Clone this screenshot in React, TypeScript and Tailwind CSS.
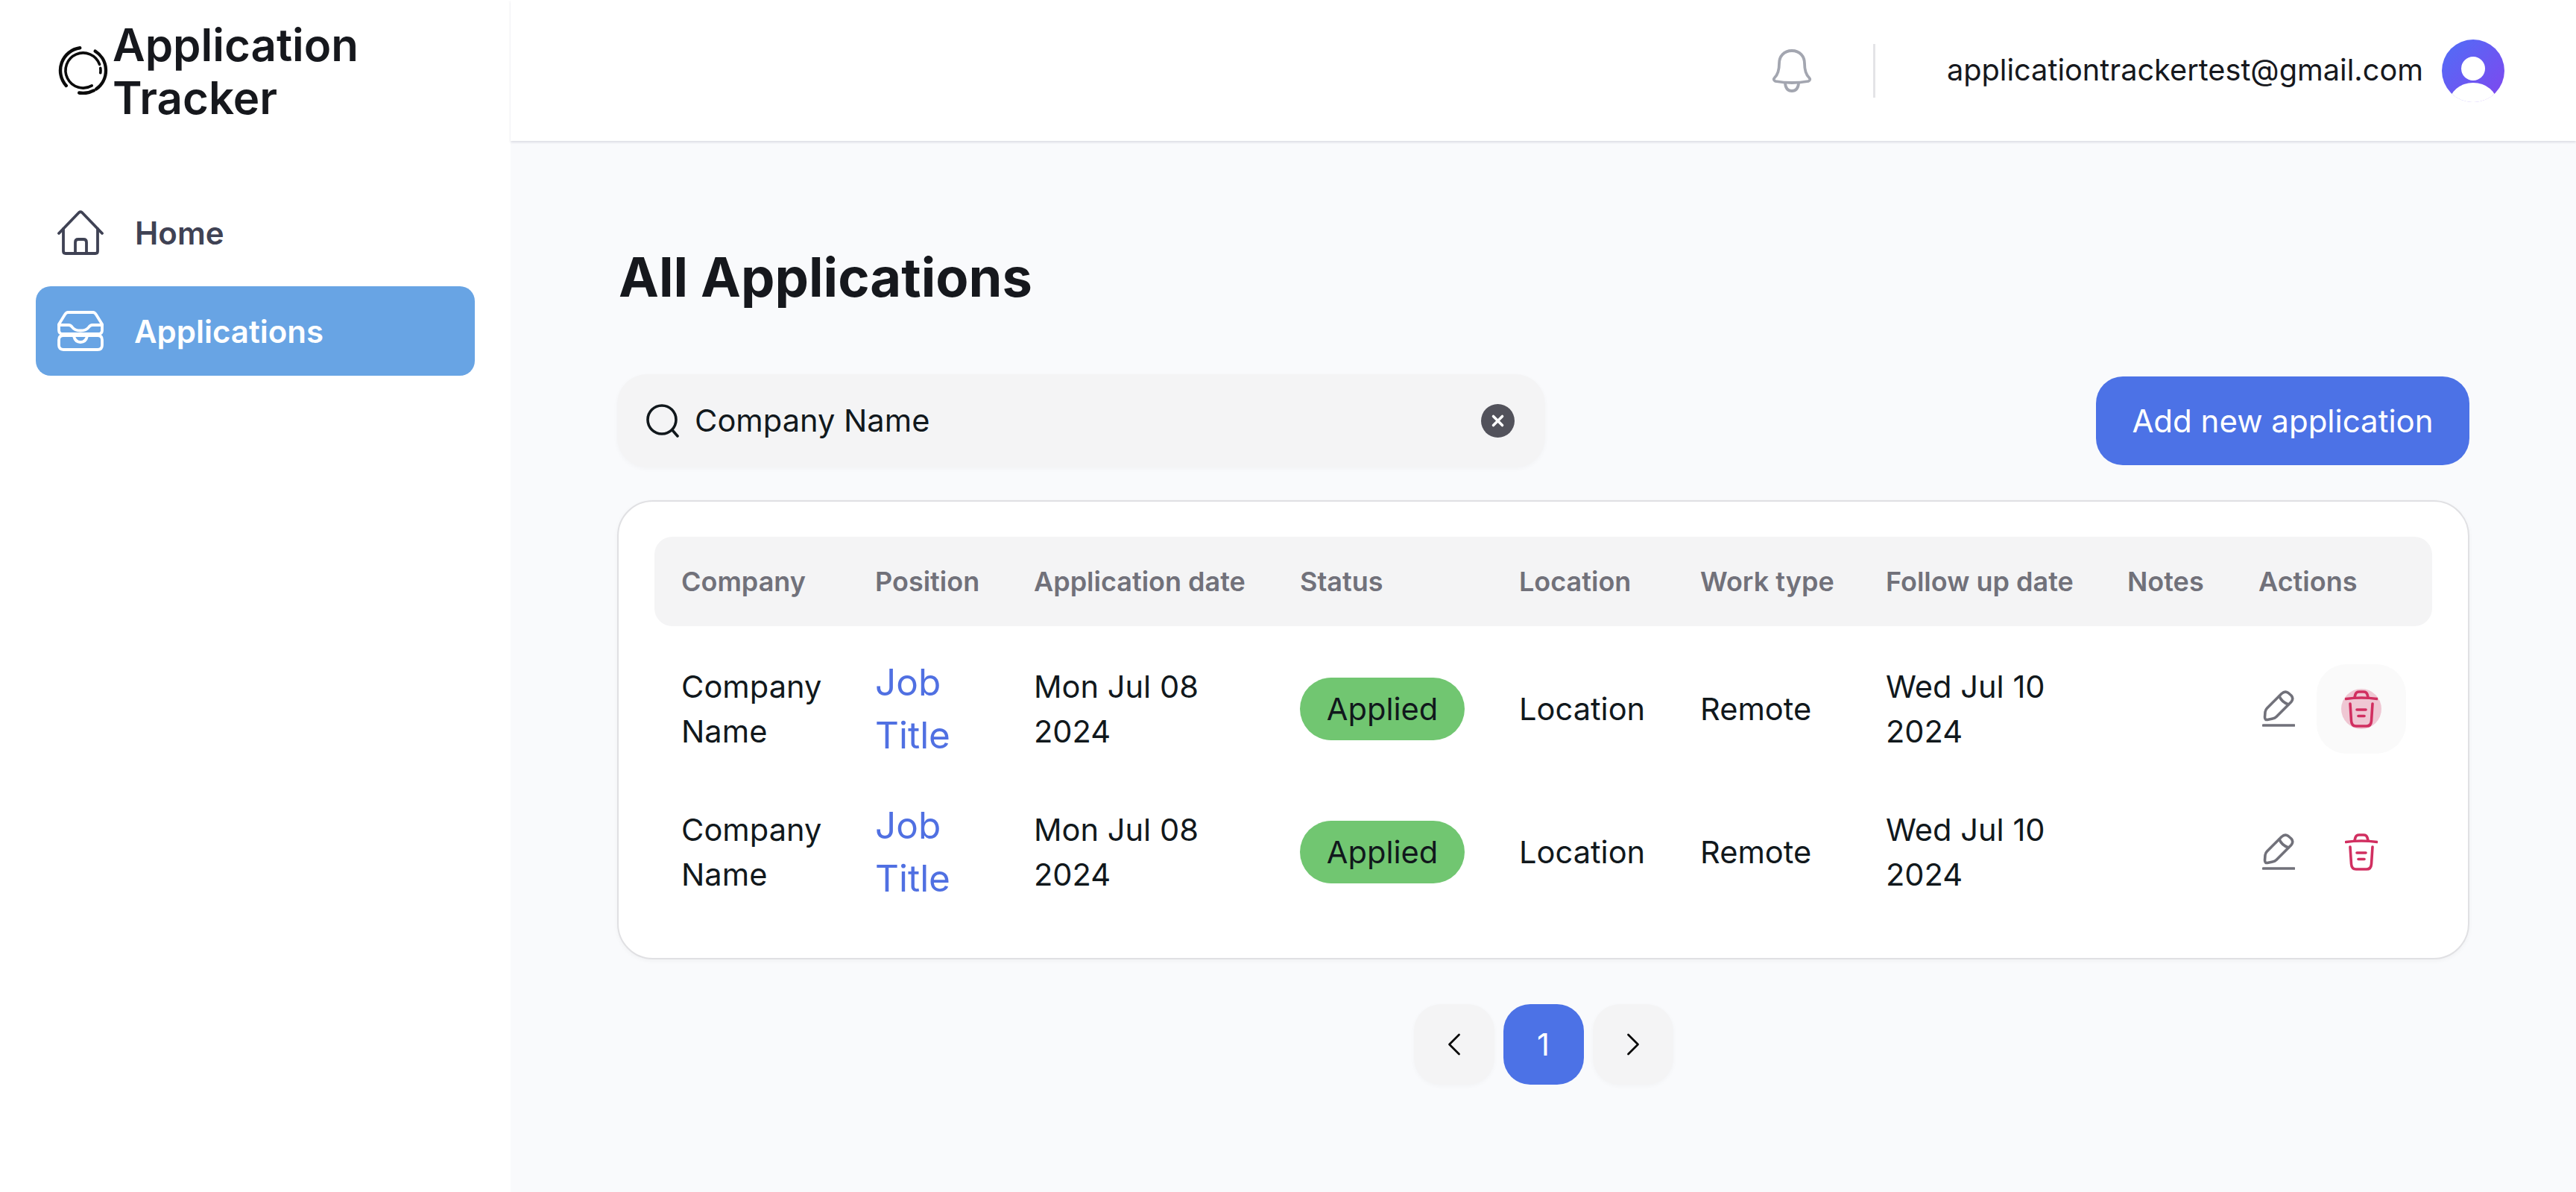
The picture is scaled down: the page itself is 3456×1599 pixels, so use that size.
function arc(cx: number, cy: number, r: number, a0: number, a1: number) {
  const p = (a: number) => {
    const t = (a * Math.PI) / 180;
    return `${(cx + r * Math.cos(t)).toFixed(2)} ${(cy + r * Math.sin(t)).toFixed(2)}`;
  };
  const large = Math.abs(a1 - a0) > 180 ? 1 : 0;
  return `M${p(a0)} A${r} ${r} 0 ${large} 1 ${p(a1)}`;
}

function Logo() {
  return (
    <svg width="67" height="65" viewBox="0 0 67 65" fill="none" stroke="#0b0b0b" strokeLinecap="round" className="shrink-0">
      <g strokeWidth="4.4">
        <path d={arc(33.5, 32.5, 30.5, 138, 262)} />
        <path d={arc(33.5, 32.5, 30.5, 302, 415)} />
        <path d={arc(33.5, 32.5, 30.5, 62, 100)} />
      </g>
      <g strokeWidth="3.6">
        <path d={arc(33.5, 32.5, 23.5, 60, 340)} />
        <path d={arc(33.5, 32.5, 23.5, 352, 368)} />
      </g>
    </svg>
  );
}

function HomeIcon() {
  return (
    <svg width="62" height="60" viewBox="0 0 62 60" fill="none" stroke="#3f4254" strokeWidth="3.8" strokeLinecap="round" strokeLinejoin="round">
      <path d="M2 31 L29 3 Q31 1.5 33 3 L60 31" />
      <path d="M8 25 V55 Q8 58 11 58 H51 Q54 58 54 55 V25" />
      <path d="M24 58 V43 Q24 39 28 39 H35 Q39 39 39 43 V58" />
    </svg>
  );
}

function InboxIcon() {
  return (
    <svg width="62" height="54" viewBox="0 0 62 54" fill="none" stroke="#ffffff" strokeWidth="3.8" strokeLinecap="round" strokeLinejoin="round">
      <path d="M14 2 H48 Q50 2 52 5 L60 18 V26 Q60 31 55 31 H7 Q2 31 2 26 V18 L10 5 Q12 2 14 2 Z" />
      <path d="M2 19 H15 Q18 19 20 22 Q23 26.5 31 26.5 Q39 26.5 42 22 Q44 19 47 19 H60" />
      <path d="M8 33 H54 Q60 33 60 39 V46 Q60 52 54 52 H8 Q2 52 2 46 V39 Q2 33 8 33 Z" />
      <path d="M22 34 Q24 42 31 42 Q38 42 40 34" />
    </svg>
  );
}

function BellIcon() {
  return (
    <svg width="56" height="58" viewBox="0 0 56 58" fill="none" stroke="#a3a6b0" strokeWidth="3.8" strokeLinecap="round" strokeLinejoin="round">
      <path d="M28 2 C17 2 11 10 11 19 C11 27 10 33 5 38 Q2 41 6 43 Q28 47 50 43 Q54 41 51 38 C46 33 45 27 45 19 C45 10 39 2 28 2 Z" />
      <path d="M19 46 Q20 56 28 56 Q36 56 37 46" />
    </svg>
  );
}

function Avatar() {
  return (
    <svg width="84" height="84" viewBox="0 0 84 84">
      <defs>
        <linearGradient id="av" x1="0" y1="0" x2="1" y2="1">
          <stop offset="0" stopColor="#4f6ef7" />
          <stop offset="1" stopColor="#8146ee" />
        </linearGradient>
        <clipPath id="avc">
          <circle cx="42" cy="42" r="42" />
        </clipPath>
      </defs>
      <circle cx="42" cy="42" r="42" fill="url(#av)" />
      <g clipPath="url(#avc)" fill="#fff">
        <circle cx="42" cy="39" r="16" />
        <ellipse cx="42" cy="85" rx="32" ry="27" />
        <rect x="0" y="73" width="84" height="11" />
      </g>
    </svg>
  );
}

function SearchIcon() {
  return (
    <svg width="46" height="46" viewBox="0 0 46 46" fill="none" stroke="#11181c" strokeWidth="3.6" strokeLinecap="round">
      <circle cx="22" cy="22" r="19" />
      <path d="M36 36 L43 44" />
    </svg>
  );
}

function ClearIcon() {
  return (
    <svg width="45" height="45" viewBox="0 0 45 45">
      <circle cx="22.5" cy="22.5" r="22.5" fill="#52525b" />
      <path d="M16.5 16.5 L28.5 28.5 M28.5 16.5 L16.5 28.5" stroke="#fff" strokeWidth="3.6" strokeLinecap="round" />
    </svg>
  );
}

function PencilIcon() {
  return (
    <svg width="44" height="50" viewBox="0 0 44 50" fill="none" stroke="#71717a" strokeWidth="3.6" strokeLinecap="round" strokeLinejoin="round">
      <path d="M26 4.5 Q30.5 0.5 35 3.5 L39 7 Q42.5 11 39 15.5 L19 35.5 Q17 37.5 14 38 L7 39.5 Q3.5 40 3.5 36 L4 29 Q4.5 26 6.5 24 Z" />
      <path d="M23 8 Q26 15.5 35 19" />
      <path d="M1.5 47 H43" />
    </svg>
  );
}

function TrashIcon() {
  return (
    <svg width="44" height="50" viewBox="0 0 44 50" fill="none" stroke="#d12f60" strokeWidth="3.6" strokeLinecap="round" strokeLinejoin="round">
      <path d="M1.5 11.5 Q22 8.5 43 11.5" />
      <path d="M13 9.5 L14 5.5 Q15 2 19 2 H25 Q29 2 30 5.5 L31 9.5" />
      <path d="M7 18 L8.5 41 Q9 48 15 48 H29 Q35 48 35.5 41 L37 18" />
      <path d="M16 26 H28" />
      <path d="M18 34.5 H26" />
    </svg>
  );
}

function Chevron({ right }: { right?: boolean }) {
  return (
    <svg width="18" height="30" viewBox="0 0 18 30" fill="none" stroke="#0b0b0b" strokeWidth="2.8" strokeLinecap="round" strokeLinejoin="round">
      <path d={right ? "M2.5 2 L15.5 15 L2.5 28" : "M15.5 2 L2.5 15 L15.5 28"} />
    </svg>
  );
}

const cols = "grid grid-cols-[260px_213px_357px_294px_243px_249px_324px_176px_270px]";
const headers = ["Company", "Position", "Application date", "Status", "Location", "Work type", "Follow up date", "Notes", "Actions"];

function Row({ active }: { active?: boolean }) {
  return (
    <div className={`${cols} h-[192px] items-center text-[41.6px] leading-[60px] text-[#11181c]`}>
      <div className="pl-9 pr-4">Company Name</div>
      <div className="pl-9 pr-4 text-[49.5px] leading-[71px] text-[#5070e2]">Job Title</div>
      <div className="pl-9 pr-16">Mon Jul 08 2024</div>
      <div className="pl-9">
        <span className="flex h-[84px] w-[221px] items-center justify-center rounded-[42px] bg-[#71c671]">Applied</span>
      </div>
      <div className="pl-9">Location</div>
      <div className="pl-9">Remote</div>
      <div className="pl-9 pr-12">Wed Jul 10 2024</div>
      <div />
      <div className="flex items-center pl-[41px]">
        <PencilIcon />
        <div className={`relative ml-[29px] flex h-[120px] w-[120px] items-center justify-center rounded-[40px] ${active ? "bg-[#fafafa]" : ""}`}>
          {active && <span className="absolute left-[33px] top-[33px] h-[54px] w-[54px] rounded-full bg-[#d12f60]/25" />}
          <span className="relative flex">
            <TrashIcon />
          </span>
        </div>
      </div>
    </div>
  );
}

export default function App() {
  return (
    <div className="flex h-[1599px] w-[3456px] overflow-hidden bg-[#f9fafc] font-['Inter',sans-serif]">
      <aside className="flex h-full w-[685px] shrink-0 flex-col bg-white">
        <div className="flex h-[189px] items-center pl-[78px]">
          <Logo />
          <div className="ml-[6px] mt-[3px] w-[400px] text-[60px] font-semibold leading-[71px] text-[#16181d]">Application Tracker</div>
        </div>
        <nav className="mt-[60px] flex flex-col px-[48px]">
          <div className="flex h-[126px] items-center pl-[29px] text-[42px] font-semibold text-[#3f4254]">
            <HomeIcon />
            <span className="ml-[42px]">Home</span>
          </div>
          <div className="mt-[9px] flex h-[120px] items-center rounded-[20px] bg-[#68a4e4] pl-[29px] text-[42px] font-semibold text-white">
            <InboxIcon />
            <span className="ml-[41px]">Applications</span>
          </div>
        </nav>
      </aside>
      <div className="flex min-w-0 flex-1 flex-col">
        <header className="flex h-[189px] shrink-0 items-center justify-end bg-white pr-[96px] shadow-[0_2px_3px_rgba(20,20,60,0.12)]">
          <BellIcon />
          <div className="ml-[81px] h-[72px] w-[3px] bg-[#e4e4e7]" />
          <span className="ml-[96px] text-[39.7px] text-[#16181d]">applicationtrackertest@gmail.com</span>
          <span className="ml-[25px] flex">
            <Avatar />
          </span>
        </header>
        <main className="flex flex-1 flex-col px-[143px] pt-[139px]">
          <h1 className="ml-[2px] h-[90px] text-[72.2px] font-bold leading-[88px] text-[#16181d]">All Applications</h1>
          <div className="mt-[85px] flex h-[122px] items-center justify-between">
            <div className="flex h-[125px] w-[1245px] items-center rounded-[40px] bg-[#f4f4f5] pl-[38px] pr-[41px] shadow-[0_2px_6px_rgba(0,0,0,0.03)]">
              <SearchIcon />
              <span className="ml-[20px] flex-1 text-[41.6px] text-[#11181c]">Company Name</span>
              <ClearIcon />
            </div>
            <button className="h-[119px] w-[501px] rounded-[36px] bg-[#4c72e6] text-[42px] text-white">Add new application</button>
          </div>
          <section className="mt-[46px] h-[616px] rounded-[48px] border-2 border-[#e0e0e3] bg-white px-[48px] pt-[47px] shadow-[0_2px_6px_rgba(0,0,0,0.04)]">
            <div className={`${cols} h-[120px] items-center rounded-[24px] bg-[#f4f4f5] text-[36px] font-semibold text-[#71717a]`}>
              {headers.map((h) => (
                <div key={h} className="pl-9">
                  {h}
                </div>
              ))}
            </div>
            <div className="mt-[15px]">
              <Row active />
              <Row />
            </div>
          </section>
          <div className="mt-[60px] flex justify-center gap-3">
            <button className="flex h-[108px] w-[108px] items-center justify-center rounded-[36px] bg-[#f4f4f5] shadow-[0_2px_6px_rgba(0,0,0,0.03)]">
              <Chevron />
            </button>
            <button className="flex h-[108px] w-[108px] items-center justify-center rounded-[36px] bg-[#4c72e6] text-[41.6px] text-white">1</button>
            <button className="flex h-[108px] w-[108px] items-center justify-center rounded-[36px] bg-[#f4f4f5] shadow-[0_2px_6px_rgba(0,0,0,0.03)]">
              <Chevron right />
            </button>
          </div>
        </main>
      </div>
    </div>
  );
}
